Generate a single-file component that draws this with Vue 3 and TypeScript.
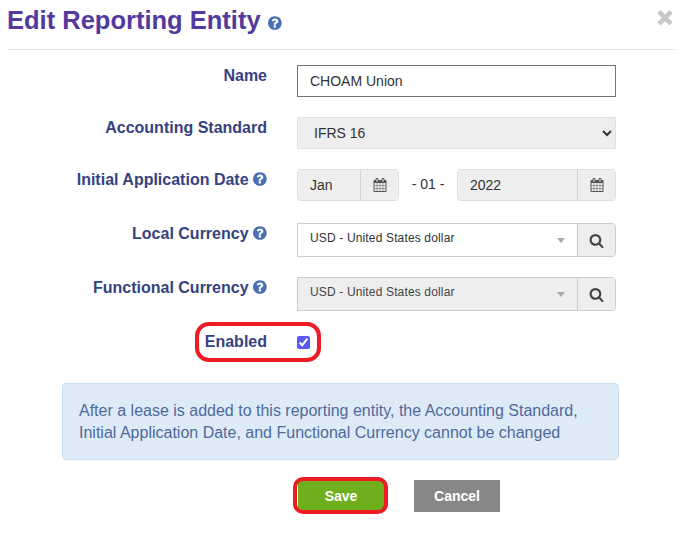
<script setup lang="ts">
const question = "M896 1376v-192q0-14-9-23t-23-9h-192q-14 0-23 9t-9 23v192q0 14 9 23t23 9h192q14 0 23-9t9-23zm256-672q0-88-55.5-163t-138.5-116-170-41q-243 0-371 213-15 24 8 42l132 100q7 6 19 6 16 0 25-12 53-68 86-92 34-24 86-24 48 0 85.5 26t37.5 59q0 38-20 61t-68 45q-63 28-115.5 86.5t-52.5 125.5v36q0 14 9 23t23 9h192q14 0 23-9t9-23q0-19 21.5-49.5t54.5-49.5q32-18 49-28.5t46-35 44.5-48 28-60.5 12.5-81zm384 192q0 209-103 385.5t-279.5 279.5-385.5 103-385.5-103-279.5-279.5-103-385.5 103-385.5 279.5-279.5 385.5-103 385.5 103 279.5 279.5 103 385.5z";
const calendar = "M192 1664h288v-288h-288v288zm352 0h320v-288h-320v288zm-352-352h288v-320h-288v320zm352 0h320v-320h-320v320zm-352-384h288v-288h-288v288zm736 736h320v-288h-320v288zm-384-736h320v-288h-320v288zm768 736h288v-288h-288v288zm-384-352h320v-320h-320v320zm-352-864v-288q0-13-9.5-22.5t-22.5-9.5h-64q-13 0-22.5 9.5t-9.5 22.5v288q0 13 9.5 22.5t22.5 9.5h64q13 0 22.5-9.5t9.5-22.5zm736 864h288v-320h-288v320zm-384-384h320v-288h-320v288zm384 0h288v-288h-288v288zm32-480v-288q0-13-9.5-22.5t-22.5-9.5h-64q-13 0-22.5 9.5t-9.5 22.5v288q0 13 9.5 22.5t22.5 9.5h64q13 0 22.5-9.5t9.5-22.5zm384-64v1280q0 52-38 90t-90 38h-1408q-52 0-90-38t-38-90v-1280q0-52 38-90t90-38h128v-96q0-66 47-113t113-47h64q66 0 113 47t47 113v96h384v-96q0-66 47-113t113-47h64q66 0 113 47t47 113v96h128q52 0 90 38t38 90z";
const search = "M1216 832q0-185-131.5-316.5t-316.5-131.5-316.5 131.5-131.5 316.5 131.5 316.5 316.5 131.5 316.5-131.5 131.5-316.5zm512 832q0 52-38 90t-90 38q-54 0-90-38l-343-342q-179 124-399 124-143 0-273.5-55.5t-225-150-150-225-55.5-273.5 55.5-273.5 150-225 225-150 273.5-55.5 273.5 55.5 225 150 150 225 55.5 273.5q0 220-124 399l343 343q37 37 37 90z";
const times = "M1490 1322q0 40-28 68l-136 136q-28 28-68 28t-68-28l-294-294-294 294q-28 28-68 28t-68-28l-136-136q-28-28-28-68t28-68l294-294-294-294q-28-28-28-68t28-68l136-136q28-28 68-28t68 28l294 294 294-294q28-28 68-28t68 28l136 136q28 28 28 68t-28 68l-294 294 294 294q28 28 28 68z";
</script>

<template>
  <div class="modal">
    <header class="head">
      <h1 class="title">Edit Reporting Entity</h1>
      <svg class="title-help" viewBox="0 0 1792 1792"><path :d="question" /></svg>
      <svg class="close" viewBox="0 0 1792 1792"><path :d="times" /></svg>
    </header>

    <form class="form" @submit.prevent>
      <div class="row row-name">
        <label class="label">Name</label>
        <input class="text-input" type="text" value="CHOAM Union" />
      </div>

      <div class="row row-std">
        <label class="label">Accounting Standard</label>
        <select class="select-input">
          <option>IFRS 16</option>
        </select>
      </div>

      <div class="row row-date">
        <label class="label">Initial Application Date
          <svg class="help" viewBox="0 0 1792 1792"><path :d="question" /></svg>
        </label>
        <div class="date">
          <div class="picker month">
            <span class="picker-value">Jan</span>
            <span class="addon"><svg class="cal" viewBox="0 0 1792 1792"><path :d="calendar" /></svg></span>
          </div>
          <span class="sep">- 01 -</span>
          <div class="picker year">
            <span class="picker-value">2022</span>
            <span class="addon"><svg class="cal" viewBox="0 0 1792 1792"><path :d="calendar" /></svg></span>
          </div>
        </div>
      </div>

      <div class="row row-cur">
        <label class="label">Local Currency
          <svg class="help" viewBox="0 0 1792 1792"><path :d="question" /></svg>
        </label>
        <div class="combo">
          <div class="combo-value">
            <span>USD - United States dollar</span>
            <i class="caret"></i>
          </div>
          <span class="addon"><svg class="mag" viewBox="0 0 1792 1792"><path :d="search" /></svg></span>
        </div>
      </div>

      <div class="row row-cur">
        <label class="label">Functional Currency
          <svg class="help" viewBox="0 0 1792 1792"><path :d="question" /></svg>
        </label>
        <div class="combo combo-off">
          <div class="combo-value">
            <span>USD - United States dollar</span>
            <i class="caret"></i>
          </div>
          <span class="addon"><svg class="mag" viewBox="0 0 1792 1792"><path :d="search" /></svg></span>
        </div>
      </div>

      <div class="row row-enabled">
        <label class="label">Enabled</label>
        <input class="check" type="checkbox" checked />
        <span class="ring ring-enabled"></span>
      </div>

      <div class="alert">After a lease is added to this reporting entity, the Accounting Standard, Initial Application Date, and Functional Currency cannot be changed</div>

      <div class="actions">
        <button class="btn save" type="button">Save<span class="ring ring-save"></span></button>
        <button class="btn cancel" type="button">Cancel</button>
      </div>
    </form>
  </div>
</template>

<style>
html, body { margin: 0; background: #fff; }
</style>

<style scoped>
.modal {
  width: 681px;
  height: 537px;
  overflow: hidden;
  font-family: "Liberation Sans", Arial, sans-serif;
  font-size: 14px;
  color: #333;
  box-sizing: border-box;
}
.head {
  position: relative;
  display: flex;
  align-items: center;
  height: 49px;
  margin: 0 6px 0 7px;
  border-bottom: 1px solid #e5e5e5;
}
.title {
  margin: -9px 0 0;
  font-size: 25.5px;
  line-height: 32px;
  font-weight: 700;
  color: #533a9e;
}
.title-help {
  width: 16px;
  height: 16px;
  margin: -3px 0 0 7px;
  fill: #4a6fb5;
}
.close {
  position: absolute;
  right: -1px;
  top: 6px;
  width: 22px;
  height: 22px;
  fill: #c8c8c8;
}
.form { display: flex; flex-direction: column; }
.row {
  position: relative;
  display: grid;
  grid-template-columns: 267px 319px;
  column-gap: 30px;
}
.row-name { margin-top: 15px; height: 32px; }
.row-std { margin-top: 20px; height: 32px; }
.row-date { margin-top: 20px; height: 32px; }
.row-cur { margin-top: 20px; height: 34px; }
.row-date + .row-cur { margin-top: 22px; }
.row-enabled { margin-top: 20px; height: 22px; align-items: center; }
.label {
  display: block;
  padding-top: 1px;
  text-align: right;
  font-size: 16px;
  line-height: 20px;
  font-weight: 700;
  color: #36427f;
}
.row-enabled .label { padding-top: 0; }
.help {
  display: inline-block;
  width: 16px;
  height: 16px;
  margin: 0 -2px 0 0;
  vertical-align: -2px;
  fill: #4a6fb5;
}
.text-input {
  box-sizing: border-box;
  width: 319px;
  height: 32px;
  margin: 0;
  padding: 0 12px;
  border: 1px solid #767676;
  background: #fff;
  font: 14px "Liberation Sans", Arial, sans-serif;
  color: #333;
  outline: none;
}
.select-input {
  box-sizing: border-box;
  width: 319px;
  height: 32px;
  margin: 0;
  padding: 0 12px;
  border: 1px solid #e2e2e2;
  background-color: #eee;
  font: 14px "Liberation Sans", Arial, sans-serif;
  color: #333;
}
.date { display: flex; align-items: stretch; }
.picker {
  box-sizing: border-box;
  display: flex;
  height: 32px;
  border: 1px solid #e0e0e0;
  border-radius: 4px;
  background: #eee;
}
.month { width: 102px; }
.year { width: 159px; }
.picker-value {
  flex: 1;
  padding-left: 12px;
  line-height: 30px;
  color: #333;
}
.sep {
  width: 58px;
  text-align: center;
  line-height: 30px;
  color: #333;
}
.picker .addon {
  width: 38px;
  border-left: 1px solid #d4d4d4;
}
.addon {
  box-sizing: border-box;
  display: flex;
  align-items: center;
  justify-content: center;
  flex: none;
  background: #eee;
}
.cal { width: 14px; height: 14px; fill: #555; }
.combo {
  box-sizing: border-box;
  display: flex;
  width: 319px;
  height: 34px;
  border: 1px solid #ccc;
  border-radius: 0 4px 4px 0;
  overflow: hidden;
}
.combo-value {
  flex: 1;
  display: flex;
  justify-content: space-between;
  padding: 5px 12px 0 12px;
  font-size: 12px;
  letter-spacing: 0.15px;
  line-height: 18px;
  color: #333;
  background: #fff;
}
.combo-off .combo-value { background: #eee; color: #444; }
.caret {
  width: 0;
  height: 0;
  margin-top: 9px;
  border-left: 4px solid transparent;
  border-right: 4px solid transparent;
  border-top: 5px solid #aaa;
}
.combo .addon {
  width: 38px;
  border-left: 1px solid #ccc;
}
.mag { width: 15px; height: 15px; fill: #444; }
.check {
  width: 13px;
  height: 13px;
  margin: 0;
  accent-color: #5a5af2;
}
.ring {
  position: absolute;
  box-sizing: border-box;
  border: 4px solid #ed1c24;
  pointer-events: none;
}
.ring-enabled {
  left: 195px;
  top: -9px;
  width: 126px;
  height: 40px;
  border-radius: 14px;
}
.alert {
  box-sizing: border-box;
  width: 557px;
  height: 77px;
  margin: 30px 0 0 62px;
  padding: 16px 16px;
  border: 1px solid #c6e2f2;
  border-radius: 4px;
  background: #deebf7;
  color: #50699b;
  font-size: 16px;
  line-height: 22px;
}
.actions {
  display: flex;
  gap: 30px;
  margin: 20px 0 0 298px;
}
.btn {
  position: relative;
  width: 86px;
  height: 32px;
  padding: 0;
  border: 0;
  color: #fff;
  font: 700 14px "Liberation Sans", Arial, sans-serif;
}
.save { background: #6fae1c; }
.cancel { background: #878787; }
.ring-save {
  left: -5px;
  top: -3px;
  width: 95px;
  height: 37px;
  border-radius: 10px;
}
</style>
